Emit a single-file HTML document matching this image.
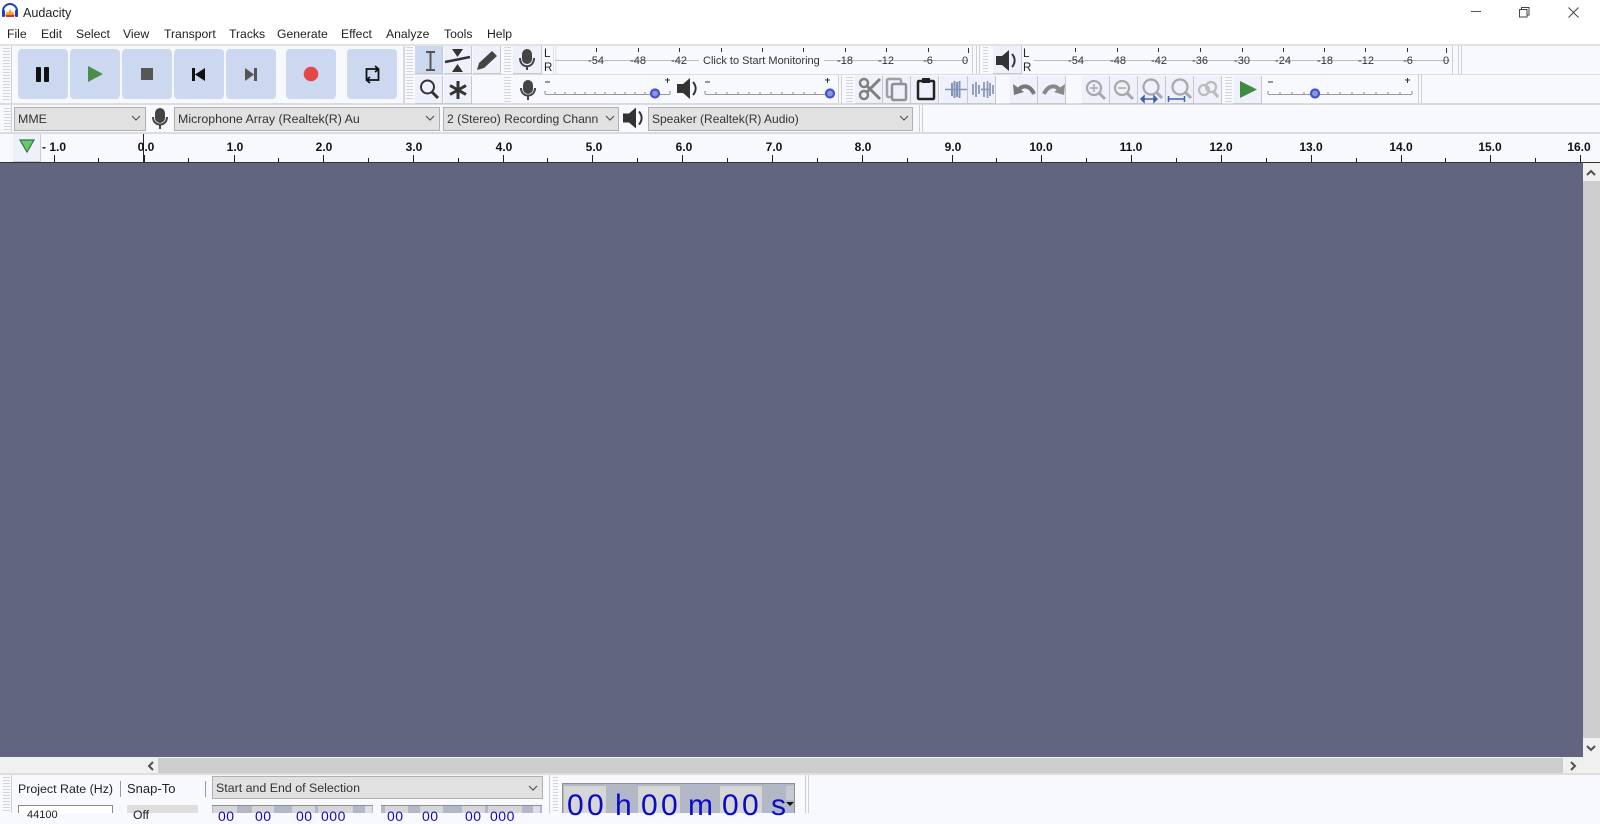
<!DOCTYPE html>
<html><head><meta charset="utf-8"><title>Audacity</title>
<style>
html,body{margin:0;padding:0;width:1600px;height:813px;overflow:hidden;background:#f8f9ff;font-family:"Liberation Sans",sans-serif;color:#222}
.a{position:absolute}
.t{position:absolute;white-space:nowrap;font-size:12.2px;line-height:16px}
.b{position:absolute;background:#ccd8f0;border-radius:4px;width:50px;height:50px;top:49px}
.tb{position:absolute;background:#eef1fb;border-right:1px solid #c8c8cc;border-bottom:1px solid #c8c8cc;width:27px;height:27px}
.s{position:absolute;background:#e1e1e1;border:1px solid #b0b0b0;box-sizing:border-box;height:24px;top:107px;font-size:12.4px;line-height:22px;padding-left:3px;white-space:nowrap;overflow:hidden;color:#333}
.g{position:absolute;width:7px;background:repeating-linear-gradient(#d4d4d8 0 1px,#f8f9ff 1px 3px)}
.hl{position:absolute;height:1px;background:#dcdcdc}
.vl{position:absolute;width:1px;background:#d0d0d0}
.rl{position:absolute;font-size:12px;font-weight:bold;top:139px;line-height:16px;width:40px;text-align:center;color:#111}
.m{position:absolute;font-size:11px;top:54px;line-height:14px;width:30px;text-align:center;color:#333}
svg{position:absolute;overflow:visible}
.d{position:absolute;top:790px;font-size:30px;line-height:32px;color:#0a0ac8;white-space:nowrap}
.f{position:absolute;top:808px;font-size:14px;line-height:16px;letter-spacing:.5px;color:#0a0ac8;white-space:nowrap}
.l{position:absolute;top:806px;height:7px;background:#d6d6d6}
</style></head><body>
<!-- title -->
<div class="a" style="left:0;top:0;width:1600px;height:44px;background:#fff"></div>
<svg style="left:0;top:0" width="24" height="20"><path d="M3 12V11a7 7 0 0 1 14 0v1" fill="none" stroke="#1a3fc0" stroke-width="2"/><rect x="2" y="10" width="3" height="7" rx="1" fill="#1a3fc0"/><rect x="15" y="10" width="3" height="7" rx="1" fill="#1a3fc0"/><path d="M5 16l2-5 1 2 2-4 2 4 1-2 2 5z" fill="#f0a020"/><path d="M6 17h8v-2H6z" fill="#e03020"/></svg>
<div class="t" style="left:23px;top:5px;font-size:12.6px">Audacity</div>
<div class="a" style="left:1471px;top:11px;width:10px;height:1px;background:#555"></div>
<svg style="left:1519px;top:7px" width="11" height="11"><path d="M.5 2.500h7.500v7.500H.5zM2.500 2.500V.5H10v7.500H8" fill="none" stroke="#444"/></svg>
<svg style="left:1568px;top:7px" width="11" height="11"><path d="M.5.5l10 10M10.500.5l-10 10" stroke="#444" fill="none"/></svg>
<div class="t" style="left:7px;top:26px">File</div>
<div class="t" style="left:41px;top:26px">Edit</div>
<div class="t" style="left:76px;top:26px">Select</div>
<div class="t" style="left:123px;top:26px">View</div>
<div class="t" style="left:164px;top:26px">Transport</div>
<div class="t" style="left:229px;top:26px">Tracks</div>
<div class="t" style="left:277px;top:26px">Generate</div>
<div class="t" style="left:341px;top:26px">Effect</div>
<div class="t" style="left:386px;top:26px">Analyze</div>
<div class="t" style="left:444px;top:26px">Tools</div>
<div class="t" style="left:487px;top:26px">Help</div>
<div class="hl" style="left:0;top:44px;width:1600px;height:2px;background:#e2e2e2"></div>
<div class="hl" style="left:405px;top:74px;width:1195px"></div>
<div class="hl" style="left:0;top:103px;width:1600px;height:2px"></div>
<div class="hl" style="left:0;top:132px;width:1600px;height:2px"></div>
<!-- transport -->
<div class="g" style="left:3px;top:48px;height:52px"></div>
<div class="vl" style="left:11px;top:46px;height:57px"></div>
<div class="b" style="left:18px"></div><div class="b" style="left:70px"></div><div class="b" style="left:122px"></div><div class="b" style="left:174px"></div><div class="b" style="left:226px"></div><div class="b" style="left:286px"></div><div class="b" style="left:347px"></div>
<svg style="left:0;top:0" width="420" height="104">
<rect x="36" y="67" width="5" height="15" rx="1" fill="#111"/><rect x="44" y="67" width="5" height="15" rx="1" fill="#111"/>
<path d="M88 66l15 8-15 8z" fill="#4c8c4a"/>
<rect x="141" y="68" width="12" height="12" fill="#555"/>
<path d="M192 68h3v13h-3zM205 68v13l-10-6.500z" fill="#111"/>
<path d="M245 68v13l9-6.500zM254 68h3v13h-3z" fill="#555"/>
<circle cx="311" cy="74" r="7.300" fill="#e24848"/>
<path d="M366.500 79V69h12M378.500 70v10h-12M375 66l3.500 3-3.500 3M370 77l-3.500 3 3.500 3" fill="none" stroke="#111" stroke-width="1.800"/>
<rect x="403" y="46" width="2" height="57" fill="#d8d8d8"/>
</svg>
<!-- tools -->
<div class="g" style="left:406px;top:47px;height:54px"></div>
<div class="tb" style="left:415px;top:46px;background:#ccd8f0"></div>
<div class="tb" style="left:444px;top:46px"></div>
<div class="tb" style="left:473px;top:46px"></div>
<div class="tb" style="left:415px;top:76px"></div>
<div class="tb" style="left:444px;top:76px"></div>
<svg style="left:0;top:0" width="520" height="104">
<path d="M426 52h9M426 70h9M430.500 52v18" stroke="#555" stroke-width="2" fill="none"/>
<path d="M445 62l25-5" stroke="#333" stroke-width="2.500"/><path d="M452 49h11l-5.500 8zM452 72h11l-5.500-8z" fill="#333"/>
<path d="M477 70l2-7 13-12 5 5-13 12z" fill="#444"/>
<circle cx="427.500" cy="87" r="6.500" fill="none" stroke="#333" stroke-width="2"/><path d="M432 92l6 6" stroke="#333" stroke-width="3"/>
<path d="M458 81v18M450 85.500l16 9M450 94.500l16-9" stroke="#333" stroke-width="3"/>
</svg>
<div class="g" style="left:504px;top:47px;height:26px"></div>
<div class="g" style="left:504px;top:77px;height:25px"></div>
<div class="tb" style="left:513px;top:46px;width:28px"></div>
<svg style="left:0;top:0" width="720" height="104">
<rect x="522" y="49" width="10" height="15" rx="5" fill="#444"/><path d="M520 58c0 11 14 11 14 0M527 66v4" fill="none" stroke="#444" stroke-width="2"/>
<rect x="523" y="80" width="10" height="14" rx="5" fill="#444"/><path d="M521 88c0 10 14 10 14 0M528 95v5" fill="none" stroke="#444" stroke-width="2"/>
<path d="M555 47h1v27h-1" fill="none" stroke="#e0e0e0"/>
</svg>
<div class="t" style="left:544px;top:46px;font-size:11.5px">L</div>
<div class="t" style="left:544px;top:60px;font-size:11.5px">R</div>
<!-- meter 1 -->
<svg style="left:0;top:0" width="1480" height="74">
<path d="M555 60.500H968M1034 60.500H1450" stroke="#bdbdbd"/>
<path d="M596.500 48v4M638.500 48v4M679.500 48v4M721.500 48v4M762.500 48v4M803.500 48v4M845.500 48v4M886.500 48v4M928.500 48v4M968.500 48v5M1075.500 48v4M1117.500 48v4M1158.500 48v4M1200.500 48v4M1242.500 48v4M1283.500 48v4M1324.500 48v4M1365.500 48v4M1407.500 48v4M1446.500 48v5" stroke="#333"/>
<rect x="553" y="46" width="1" height="28" fill="#e0e0e0"/>
</svg>
<div class="m" style="left:581px">-54</div><div class="m" style="left:623px">-48</div><div class="m" style="left:664px">-42</div>
<div class="t" style="left:699px;top:54px;font-size:11px;line-height:14px;background:#f8f9ff;padding:0 4px;color:#333">Click to Start Monitoring</div>
<div class="m" style="left:830px">-18</div><div class="m" style="left:871px">-12</div><div class="m" style="left:913px">-6</div><div class="m" style="left:950px">0</div>
<div class="vl" style="left:972px;top:46px;height:28px"></div><div class="vl" style="left:976px;top:46px;height:28px"></div><div class="vl" style="left:979px;top:46px;height:28px"></div>
<div class="g" style="left:983px;top:47px;height:26px;width:5px"></div>
<div class="tb" style="left:993px;top:46px;width:28px"></div>
<svg style="left:0;top:0" width="1040" height="74"><path d="M996 56h6l7-6v21l-7-6h-6z" fill="#333"/><path d="M1012 54c3.500 4 3.500 9 0 13" stroke="#333" stroke-width="2" fill="none"/></svg>
<div class="t" style="left:1023px;top:46px;font-size:11.5px">L</div>
<div class="t" style="left:1023px;top:60px;font-size:11.5px">R</div>
<div class="m" style="left:1061px">-54</div><div class="m" style="left:1103px">-48</div><div class="m" style="left:1144px">-42</div><div class="m" style="left:1185px">-36</div><div class="m" style="left:1227px">-30</div><div class="m" style="left:1268px">-24</div><div class="m" style="left:1310px">-18</div><div class="m" style="left:1351px">-12</div><div class="m" style="left:1393px">-6</div><div class="m" style="left:1431px">0</div>
<div class="vl" style="left:1452px;top:46px;height:28px"></div><div class="vl" style="left:1458px;top:46px;height:28px"></div><div class="vl" style="left:1461px;top:46px;height:28px"></div>
<!-- sliders -->
<svg style="left:0;top:0" width="1440" height="104">
<path d="M545 82h5M665 80h5M667.500 78v5M705 82h5M825 80h5M827.500 78v5M1268 82h5M1405 80h5M1407.500 78v5" stroke="#333"/>
<path d="M545 94.500H670M705 94.500H832M1268 94.500H1412" stroke="#999"/>
<path d="M545 91v3M555 92v2M565 92v2M575 92v2M585 92v2M595 92v2M605 92v2M615 92v2M625 92v2M635 92v2M645 92v2M670 91v3M705 91v3M716 92v2M727 92v2M738 92v2M749 92v2M760 92v2M771 92v2M782 92v2M793 92v2M804 92v2M815 92v2M1268 91v3M1280 92v2M1292 92v2M1304 92v2M1328 92v2M1340 92v2M1352 92v2M1364 92v2M1376 92v2M1388 92v2M1400 92v2M1412 91v3" stroke="#888"/>
<circle cx="655" cy="93.500" r="4" fill="#9098c8" stroke="#4450e0" stroke-width="2.200"/>
<circle cx="830" cy="93.500" r="4" fill="#9098c8" stroke="#4450e0" stroke-width="2.200"/>
<circle cx="1315" cy="93.500" r="4" fill="#9098c8" stroke="#4450e0" stroke-width="2.200"/>
<path d="M677 84h6l7-6v21l-7-6h-6z" fill="#333"/><path d="M693 82c3.500 4 3.500 9 0 13" stroke="#333" stroke-width="2" fill="none"/>
</svg>
<div class="vl" style="left:838px;top:75px;height:28px"></div><div class="vl" style="left:841px;top:75px;height:28px"></div>
<div class="g" style="left:846px;top:77px;height:25px"></div>
<div class="tb" style="left:855px;top:76px"></div><div class="tb" style="left:883px;top:76px"></div><div class="tb" style="left:911px;top:76px"></div><div class="tb" style="left:940px;top:76px"></div><div class="tb" style="left:968px;top:76px"></div>
<div class="tb" style="left:1010px;top:76px"></div><div class="tb" style="left:1038px;top:76px"></div>
<div class="tb" style="left:1082px;top:76px"></div><div class="tb" style="left:1110px;top:76px"></div><div class="tb" style="left:1138px;top:76px"></div><div class="tb" style="left:1166px;top:76px"></div><div class="tb" style="left:1194px;top:76px"></div>
<div class="g" style="left:1225px;top:77px;height:25px"></div>
<div class="tb" style="left:1234px;top:76px"></div>
<svg style="left:0;top:0" width="1270" height="104">
<circle cx="864" cy="95" r="4" fill="none" stroke="#808080" stroke-width="2.500"/><circle cx="864" cy="83" r="4" fill="none" stroke="#808080" stroke-width="2.500"/><path d="M867 86l13 13M867 92l13-13" stroke="#808080" stroke-width="3"/>
<rect x="887" y="79" width="14" height="18" rx="1.500" fill="none" stroke="#a0a0a0" stroke-width="2.500"/><rect x="892" y="84" width="14" height="16" rx="1.500" fill="#eef1fb" stroke="#909090" stroke-width="2.500"/>
<rect x="918" y="81" width="16" height="18" rx="1" fill="#eef1fb" stroke="#222" stroke-width="2.500"/><rect x="922" y="78" width="8" height="5" fill="#222"/>
<path d="M945 89.500h22" stroke="#8494b8" stroke-width="1.500"/><path d="M952 83v13M954.500 81v17M957 82v15M959.500 81v17" stroke="#8494b8" stroke-width="2"/>
<path d="M973 84v11M976 82v15M979 85v9M981 89.500h8M984 82v15M987.500 81v17M990 83v13M993 85v9" stroke="#8a9ab8" stroke-width="1.800"/>
<path d="M1018 91c4-7 12-6 16 3" fill="none" stroke="#777" stroke-width="4"/><path d="M1013 84l1 11 10-3z" fill="#777"/>
<path d="M1060 91c-4-7-12-6-16 3" fill="none" stroke="#888" stroke-width="4"/><path d="M1065 84l-1 11-10-3z" fill="#888"/>
<g fill="none" stroke="#a8a8a8" stroke-width="2.200"><circle cx="1094" cy="88" r="7"/><path d="M1099 93l6 6" stroke-width="3"/><path d="M1090 88h8M1094 84v8" stroke-width="1.500"/>
<circle cx="1122" cy="88" r="7"/><path d="M1127 93l6 6" stroke-width="3"/><path d="M1118 88h8" stroke-width="1.500"/>
<circle cx="1151" cy="87" r="7.500"/><path d="M1156 92l6 6" stroke-width="3"/>
<circle cx="1180" cy="87" r="7.500"/><path d="M1185 92l6 6" stroke-width="3"/>
<circle cx="1204" cy="90" r="5" stroke="#bbb"/><circle cx="1211" cy="87" r="5" stroke="#bbb"/><path d="M1213 91l5 6" stroke-width="3" stroke="#bbb"/></g>
<path d="M1141 99h16M1141 99l3-3v6zM1157 99l-3-3v6z" fill="#4060b0" stroke="#4060b0" stroke-width="1.500"/>
<path d="M1169 99h15M1168.500 96v6M1184.500 96v6" stroke="#4060b0" stroke-width="1.500" fill="none"/>
<path d="M1240 81l17 8.500-17 8.500z" fill="#3f8a3f"/>
</svg>
<div class="vl" style="left:1418px;top:75px;height:28px"></div><div class="vl" style="left:1421px;top:75px;height:28px"></div>
<!-- device row -->
<div class="g" style="left:4px;top:108px;height:22px"></div>
<div class="vl" style="left:11px;top:105px;height:27px"></div>
<div class="s" style="left:14px;width:132px;">MME</div>
<div class="s" style="left:174px;width:266px;">Microphone Array (Realtek(R) Au</div>
<div class="s" style="left:443px;width:176px;font-size:12.1px">2 (Stereo) Recording Chann</div>
<div class="s" style="left:648px;width:265px;font-size:12px">Speaker (Realtek(R) Audio)</div>
<svg style="left:0;top:0" width="930" height="132">
<path d="M132 116l4 4 4-4M426 116l4 4 4-4M606 116l4 4 4-4M900 116l4 4 4-4" stroke="#555" fill="none" stroke-width="1.200"/>
<rect x="155" y="108" width="10" height="15" rx="5" fill="#444"/><path d="M153 117c0 10 14 10 14 0M160 125v4" fill="none" stroke="#444" stroke-width="2"/>
<path d="M623 113.500h6l7-6v21l-7-6h-6z" fill="#333"/><path d="M639 111.500c3.500 4 3.500 9 0 13" stroke="#333" stroke-width="2" fill="none"/>
</svg>
<div class="vl" style="left:919px;top:105px;height:27px"></div><div class="vl" style="left:922px;top:105px;height:27px"></div>
<!-- ruler -->
<div class="a" style="left:13px;top:134px;width:27px;height:27px;background:#eef1fb;border-right:1px solid #ccc;border-bottom:1px solid #ccc"></div>
<svg style="left:0;top:0" width="1600" height="164">
<path d="M20 140h14l-7 12z" fill="#6cc870" stroke="#2f7a3a" stroke-width="1.200"/>
<path d="M54.500 155v7M144.500 155v7M234.500 155v7M323.500 155v7M413.500 155v7M503.500 155v7M592.500 155v7M682.500 155v7M772.500 155v7M862.500 155v7M952.500 155v7M1041.500 155v7M1131.500 155v7M1221.500 155v7M1311.500 155v7M1401.500 155v7M1490.500 155v7M1580.500 155v7M98.500 158v4M188.500 158v4M278.500 158v4M368.500 158v4M458.500 158v4M547.500 158v4M637.500 158v4M727.500 158v4M817.500 158v4M907.500 158v4M996.500 158v4M1086.500 158v4M1176.500 158v4M1266.500 158v4M1356.500 158v4M1445.500 158v4M1535.500 158v4" stroke="#222"/>
<path d="M143.500 134v28" stroke="#222"/>
</svg>
<div class="rl" style="left:34px">- 1.0</div><div class="rl" style="left:126px">0.0</div><div class="rl" style="left:215px">1.0</div><div class="rl" style="left:304px">2.0</div><div class="rl" style="left:394px">3.0</div><div class="rl" style="left:484px">4.0</div><div class="rl" style="left:574px">5.0</div><div class="rl" style="left:664px">6.0</div><div class="rl" style="left:754px">7.0</div><div class="rl" style="left:843px">8.0</div><div class="rl" style="left:933px">9.0</div><div class="rl" style="left:1021px">10.0</div><div class="rl" style="left:1111px">11.0</div><div class="rl" style="left:1201px">12.0</div><div class="rl" style="left:1291px">13.0</div><div class="rl" style="left:1381px">14.0</div><div class="rl" style="left:1470px">15.0</div><div class="rl" style="left:1559px">16.0</div>
<!-- main -->
<div class="a" style="left:0;top:162px;width:1600px;height:1px;background:#333"></div>
<div class="a" style="left:0;top:163px;width:1583px;height:594px;background:#62657f"></div>
<div class="a" style="left:1583px;top:163px;width:17px;height:594px;background:#f0f0f0"></div>
<div class="a" style="left:1583px;top:181px;width:17px;height:557px;background:#cdcdcd"></div>
<div class="a" style="left:0;top:757px;width:1600px;height:16px;background:#f0f0f0"></div>
<div class="a" style="left:158px;top:758px;width:1405px;height:15px;background:#cdcdcd"></div>
<div class="a" style="left:0;top:773px;width:1600px;height:2px;background:#dedede"></div>
<svg style="left:0;top:0" width="1600" height="780">
<path d="M1587 175l4-4 4 4M1587 746l4 4 4-4M153 762l-4 4 4 4M1571 762l4 4-4 4" fill="none" stroke="#505050" stroke-width="2"/>
</svg>
<!-- bottom -->
<div class="g" style="left:3px;top:777px;height:36px"></div>
<div class="vl" style="left:11px;top:775px;height:38px"></div>
<div class="t" style="left:18px;top:781px;font-size:12.4px">Project Rate (Hz)</div>
<div class="vl" style="left:120px;top:781px;height:16px;background:#999"></div>
<div class="t" style="left:127px;top:781px;font-size:13px">Snap-To</div>
<div class="vl" style="left:205px;top:781px;height:16px;background:#999"></div>
<div class="s" style="left:212px;top:776px;width:331px;height:23px">Start and End of Selection</div>
<svg style="left:0;top:0" width="560" height="800"><path d="M529 786l4 4 4-4" fill="none" stroke="#555" stroke-width="1.200"/></svg>
<div class="a" style="left:18px;top:805px;width:95px;height:8px;background:#fff;border:1px solid #888;border-bottom:0;box-sizing:border-box"></div>
<div class="t" style="left:27px;top:807px;font-size:11px">44100</div>
<div class="a" style="left:127px;top:805px;width:71px;height:8px;background:#dedede"></div>
<div class="t" style="left:133px;top:807px">Off</div>
<div class="a" style="left:212px;top:805px;width:161px;height:8px;background:#b3b8c6;border-top:1px solid #8f8f8f;box-sizing:border-box"></div>
<div class="a" style="left:381px;top:805px;width:161px;height:8px;background:#b3b8c6;border-top:1px solid #8f8f8f;box-sizing:border-box"></div>
<div class="l" style="left:213px;width:24px"></div><div class="l" style="left:252px;width:22px"></div><div class="l" style="left:292px;width:23px"></div><div class="l" style="left:318px;width:35px"></div><div class="l" style="left:365px;width:7px;background:#dde"></div>
<div class="l" style="left:385px;width:23px"></div><div class="l" style="left:420px;width:23px"></div><div class="l" style="left:462px;width:23px"></div><div class="l" style="left:488px;width:34px"></div><div class="l" style="left:533px;width:7px;background:#dde"></div>
<div class="f" style="left:218px">00</div><div class="f" style="left:255px">00</div><div class="f" style="left:296px">00</div><div class="f" style="left:321px">000</div>
<div class="f" style="left:387px">00</div><div class="f" style="left:422px">00</div><div class="f" style="left:465px">00</div><div class="f" style="left:490px">000</div>
<div class="g" style="left:553px;top:777px;height:36px;width:5px"></div>
<div class="vl" style="left:549px;top:775px;height:38px"></div>
<div class="a" style="left:562px;top:783px;width:233px;height:30px;background:#b3b8c6;border:1px solid #8f8f8f;border-bottom:0;box-sizing:border-box"></div>
<div class="a" style="left:564px;top:786px;width:42px;height:27px;background:#d6d6d6"></div>
<div class="a" style="left:638px;top:786px;width:42px;height:27px;background:#d6d6d6"></div>
<div class="a" style="left:720px;top:786px;width:42px;height:27px;background:#d6d6d6"></div>
<div class="a" style="left:786px;top:786px;width:8px;height:14px;background:#c6cad6"></div>
<div class="d" style="left:567px;letter-spacing:3.300px">00</div>
<div class="d" style="left:615px">h</div>
<div class="d" style="left:641px;letter-spacing:3.300px">00</div>
<div class="d" style="left:688px">m</div>
<div class="d" style="left:722px;letter-spacing:3.300px">00</div>
<div class="d" style="left:771px">s</div>
<svg style="left:0;top:0" width="800" height="813"><path d="M786 802h8l-4 4z" fill="#111"/></svg>
<div class="vl" style="left:805px;top:775px;height:38px"></div><div class="vl" style="left:808px;top:775px;height:38px"></div>
</body></html>
